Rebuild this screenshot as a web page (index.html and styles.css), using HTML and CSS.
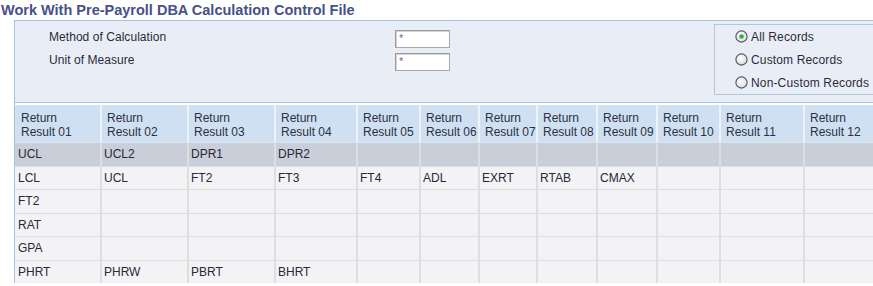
FILE: index.html
```html
<!DOCTYPE html>
<html>
<head>
<meta charset="utf-8">
<title>Work With Pre-Payroll DBA Calculation Control File</title>
<link rel="stylesheet" href="styles.css">
</head>
<body>
<h1 class="title">Work With Pre-Payroll DBA Calculation Control File</h1>
<div class="content">
  <div class="panel">
    <div class="fields">
      <div class="field">
        <label class="label">Method of Calculation</label>
        <div class="input">*</div>
      </div>
      <div class="field">
        <label class="label">Unit of Measure</label>
        <div class="input">*</div>
      </div>
    </div>
    <div class="radios">
      <div class="radio">
        <svg class="dot" width="13" height="13" viewBox="0 0 13 13"><defs><radialGradient id="g1" cx="0.4" cy="0.35" r="0.7"><stop offset="0" stop-color="#ffffff"/><stop offset="1" stop-color="#d6dbe2"/></radialGradient></defs><circle cx="6.5" cy="6.5" r="5.6" fill="url(#g1)" stroke="#4b5563" stroke-width="1.1"/><circle cx="6.5" cy="6.5" r="2.3" fill="#2fae3e"/></svg>
        <span>All Records</span>
      </div>
      <div class="radio">
        <svg class="dot" width="13" height="13" viewBox="0 0 13 13"><defs><radialGradient id="g2" cx="0.4" cy="0.35" r="0.7"><stop offset="0" stop-color="#ffffff"/><stop offset="1" stop-color="#d6dbe2"/></radialGradient></defs><circle cx="6.5" cy="6.5" r="5.6" fill="url(#g2)" stroke="#4b5563" stroke-width="1.1"/></svg>
        <span>Custom Records</span>
      </div>
      <div class="radio">
        <svg class="dot" width="13" height="13" viewBox="0 0 13 13"><defs><radialGradient id="g3" cx="0.4" cy="0.35" r="0.7"><stop offset="0" stop-color="#ffffff"/><stop offset="1" stop-color="#d6dbe2"/></radialGradient></defs><circle cx="6.5" cy="6.5" r="5.6" fill="url(#g3)" stroke="#4b5563" stroke-width="1.1"/></svg>
        <span>Non-Custom Records</span>
      </div>
    </div>
  </div>
  <table class="grid">
    <colgroup>
      <col class="w85"><col class="w87"><col class="w87"><col class="w82"><col class="w63"><col class="w59"><col class="w58"><col class="w60"><col class="w60"><col class="w63"><col class="w84"><col class="w70">
    </colgroup>
    <thead>
      <tr>
        <th>Return<br>Result 01</th><th>Return<br>Result 02</th><th>Return<br>Result 03</th><th>Return<br>Result 04</th><th>Return<br>Result 05</th><th>Return<br>Result 06</th><th>Return<br>Result 07</th><th>Return<br>Result 08</th><th>Return<br>Result 09</th><th>Return<br>Result 10</th><th>Return<br>Result 11</th><th>Return<br>Result 12</th>
      </tr>
    </thead>
    <tbody>
      <tr class="selected"><td>UCL</td><td>UCL2</td><td>DPR1</td><td>DPR2</td><td></td><td></td><td></td><td></td><td></td><td></td><td></td><td></td></tr>
      <tr><td>LCL</td><td>UCL</td><td>FT2</td><td>FT3</td><td>FT4</td><td>ADL</td><td>EXRT</td><td>RTAB</td><td>CMAX</td><td></td><td></td><td></td></tr>
      <tr><td>FT2</td><td></td><td></td><td></td><td></td><td></td><td></td><td></td><td></td><td></td><td></td><td></td></tr>
      <tr><td>RAT</td><td></td><td></td><td></td><td></td><td></td><td></td><td></td><td></td><td></td><td></td><td></td></tr>
      <tr><td>GPA</td><td></td><td></td><td></td><td></td><td></td><td></td><td></td><td></td><td></td><td></td><td></td></tr>
      <tr><td>PHRT</td><td>PHRW</td><td>PBRT</td><td>BHRT</td><td></td><td></td><td></td><td></td><td></td><td></td><td></td><td></td></tr>
    </tbody>
  </table>
</div>
</body>
</html>
```

FILE: styles.css
```css
html, body {
  margin: 0;
  padding: 0;
  background: #ffffff;
  overflow: hidden;
  font-family: "Liberation Sans", Arial, sans-serif;
  font-size: 12px;
  color: #2a2a38;
}

.title {
  margin: 0;
  padding: 2px 0 0 1px;
  height: 18px;
  font-size: 14.5px;
  line-height: 16px;
  font-weight: bold;
  color: #46508a;
  white-space: nowrap;
}

.content {
  margin-left: 14px;
  border-left: 1px solid #a9c2dd;
  overflow: hidden;
}

.panel {
  display: flex;
  height: 81px;
  background: #e9eef6;
  border-top: 1px solid #a9c2dd;
  border-bottom: 1px solid #a9c2dd;
  overflow: hidden;
}

.fields {
  padding: 9px 0 0 34px;
  display: flex;
  flex-direction: column;
  flex-shrink: 0;
}

.field {
  display: flex;
  height: 22.5px;
}

.label {
  width: 346px;
  line-height: 14px;
  color: #2a2a3c;
  letter-spacing: 0.05px;
}

.input {
  box-sizing: border-box;
  width: 55px;
  height: 18px;
  background: #ffffff;
  border: 1px solid #a8a8a8;
  border-top-color: #9a9a9a;
  border-left-color: #9a9a9a;
  box-shadow: inset 1px 1px 0 #d4d4d4;
  padding: 1px 0 0 3px;
  font-size: 11px;
  line-height: 12px;
  color: #7b5a9c;
}

.radios {
  margin: 3px -10px 0 264px;
  box-sizing: border-box;
  height: 71px;
  flex: 1 0 auto;
  border: 1px solid #b3c6dc;
  padding: 0 0 0 20px;
  display: flex;
  flex-direction: column;
}

.radio {
  height: 23px;
  display: flex;
  align-items: center;
  white-space: nowrap;
  color: #2c2a40;
  letter-spacing: 0.15px;
}

.dot {
  display: block;
  margin-right: 3px;
}

.grid {
  margin-top: 2px;
  border-collapse: separate;
  border-spacing: 0;
  table-layout: fixed;
  width: 858px;
}

.w85 { width: 85px; }
.w87 { width: 87px; }
.w82 { width: 82px; }
.w63 { width: 63px; }
.w59 { width: 59px; }
.w58 { width: 58px; }
.w60 { width: 60px; }
.w84 { width: 84px; }
.w70 { width: 70px; }

.grid th {
  height: 37px;
  box-sizing: border-box;
  background: #cfe0f2;
  border-left: 2px solid #eef3f9;
  text-align: left;
  vertical-align: top;
  font-weight: normal;
  line-height: 14px;
  padding: 6px 0 0 5px;
  color: #2e3040;
  white-space: nowrap;
  overflow: hidden;
}

.grid th:first-child {
  border-left: 0;
  padding-left: 6px;
}

.grid td {
  height: 23.5px;
  box-sizing: border-box;
  background: #f3f3f5;
  border-left: 2px solid #dcdee4;
  border-top: 1.5px solid #dcdee4;
  padding: 0 0 0 2px;
  line-height: 14px;
  white-space: nowrap;
  overflow: hidden;
  color: #2a2838;
}

.grid td:first-child {
  border-left: 0;
  padding-left: 3px;
}

.grid tr.selected td {
  background: #c9ced9;
  border-top: 1px solid #dfe3ea;
}
```
